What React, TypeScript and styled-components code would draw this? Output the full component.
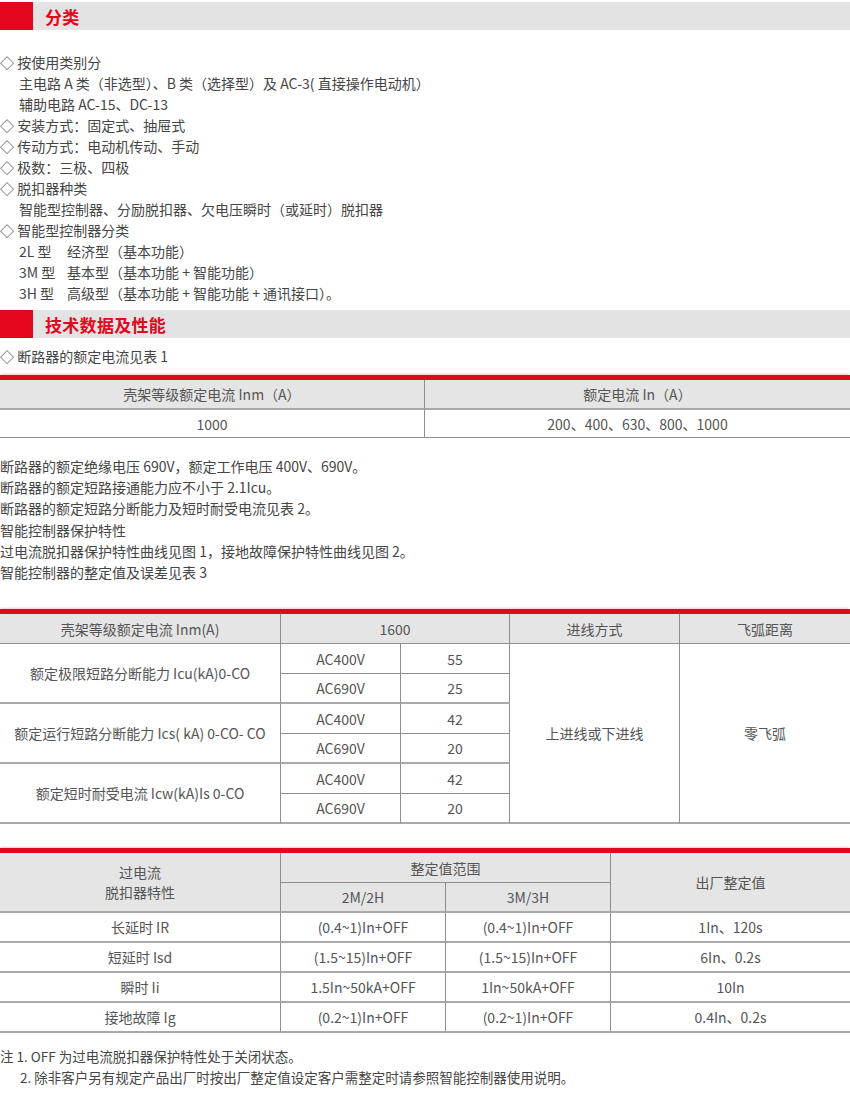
import React from 'react';
import styled, { createGlobalStyle } from 'styled-components';

const RED = '#e4061c';
const THIN = '1px solid #8e8e8e';
const THICK = '2px solid #a9a9a9';

const GlobalStyle = createGlobalStyle`
  html, body { margin: 0; padding: 0; background: #fff; }
  body {
    font-family: "Noto Sans CJK SC", "Noto Sans", sans-serif;
    color: #444;
  }
`;

const Page = styled.div`
  width: 850px;
  padding-top: 2px;
  display: flex;
  flex-direction: column;
`;

const SectionHeader = styled.div<{ $mt?: number }>`
  display: flex;
  height: 28px;
  margin-top: ${(p) => p.$mt ?? 0}px;
`;

const RedBlock = styled.div`
  width: 33px;
  background: ${RED};
`;

const HeaderBar = styled.div`
  flex: 1;
  background: #e3e3e3;
  padding-left: 12px;
  display: flex;
  align-items: center;
  font-size: 17px;
  font-weight: 700;
  color: ${RED};
  letter-spacing: 0.3px;
`;

const TextBlock = styled.div<{ $mt: number; $lh: number }>`
  margin-top: ${(p) => p.$mt}px;
  font-size: 14px;
  line-height: ${(p) => p.$lh}px;
  color: #454545;
`;

const Line = styled.div<{ $indent?: boolean }>`
  padding-left: ${(p) => (p.$indent ? 19 : 0)}px;
  white-space: nowrap;
`;

const ModelTag = styled.span`
  display: inline-block;
  width: 48px;
`;

const Grid = styled.div<{ $mt: number; $cols: string; $rows: string }>`
  margin-top: ${(p) => p.$mt}px;
  display: grid;
  grid-template-columns: ${(p) => p.$cols};
  grid-template-rows: ${(p) => p.$rows};
  border-top: 5px solid ${RED};
  box-shadow: 0 -2px 2px -1px rgba(228, 6, 28, 0.25);
  font-size: 14px;
  color: #555;
`;

type Bottom = 'thin' | 'thick' | 'none';

const Cell = styled.div<{
  $col: string;
  $row: string;
  $head?: boolean;
  $last?: boolean;
  $bb?: Bottom;
}>`
  grid-column: ${(p) => p.$col};
  grid-row: ${(p) => p.$row};
  box-sizing: border-box;
  display: flex;
  flex-direction: column;
  align-items: center;
  justify-content: center;
  text-align: center;
  line-height: 20px;
  white-space: nowrap;
  background: ${(p) => (p.$head ? '#e5e5e5' : '#fff')};
  border-right: ${(p) => (p.$last ? 'none' : THIN)};
  border-bottom: ${(p) => (p.$bb === 'thick' ? THICK : p.$bb === 'none' ? 'none' : THIN)};
`;

const Notes = styled.div`
  margin-top: 13px;
  font-size: 13.5px;
  line-height: 21px;
  color: #454545;
`;

const NoteLine = styled.div<{ $indent?: boolean }>`
  padding-left: ${(p) => (p.$indent ? 20 : 0)}px;
  white-space: nowrap;
`;

const Header: React.FC<{ title: string; mt?: number }> = ({ title, mt }) => (
  <SectionHeader $mt={mt}>
    <RedBlock />
    <HeaderBar>{title}</HeaderBar>
  </SectionHeader>
);

const groups = [
  { label: '额定极限短路分断能力 Icu(kA)0-CO', a: '55', b: '25' },
  { label: '额定运行短路分断能力 Ics( kA) 0-CO- CO', a: '42', b: '20' },
  { label: '额定短时耐受电流 Icw(kA)Is 0-CO', a: '42', b: '20' },
];

const settings = [
  ['长延时 IR', '(0.4~1)In+OFF', '(0.4~1)In+OFF', '1In、120s'],
  ['短延时 Isd', '(1.5~15)In+OFF', '(1.5~15)In+OFF', '6In、0.2s'],
  ['瞬时 Ii', '1.5In~50kA+OFF', '1In~50kA+OFF', '10In'],
  ['接地故障 Ig', '(0.2~1)In+OFF', '(0.2~1)In+OFF', '0.4In、0.2s'],
];

export default function App() {
  return (
    <>
      <GlobalStyle />
      <Page>
        <Header title="分类" />
        <TextBlock $mt={22} $lh={21}>
          <Line>◇ 按使用类别分</Line>
          <Line $indent>主电路 A 类（非选型）、B 类（选择型）及 AC-3( 直接操作电动机）</Line>
          <Line $indent>辅助电路 AC-15、DC-13</Line>
          <Line>◇ 安装方式：固定式、抽屉式</Line>
          <Line>◇ 传动方式：电动机传动、手动</Line>
          <Line>◇ 极数：三极、四极</Line>
          <Line>◇ 脱扣器种类</Line>
          <Line $indent>智能型控制器、分励脱扣器、欠电压瞬时（或延时）脱扣器</Line>
          <Line>◇ 智能型控制器分类</Line>
          <Line $indent>
            <ModelTag>2L 型</ModelTag>经济型（基本功能）
          </Line>
          <Line $indent>
            <ModelTag>3M 型</ModelTag>基本型（基本功能 + 智能功能）
          </Line>
          <Line $indent>
            <ModelTag>3H 型</ModelTag>高级型（基本功能 + 智能功能 + 通讯接口）。
          </Line>
        </TextBlock>

        <Header title="技术数据及性能" mt={6} />
        <TextBlock $mt={8} $lh={21}>
          <Line>◇ 断路器的额定电流见表 1</Line>
        </TextBlock>

        <Grid $mt={8} $cols="425px 1fr" $rows="30px 28px">
          <Cell $col="1" $row="1" $head $bb="thick">壳架等级额定电流 Inm（A）</Cell>
          <Cell $col="2" $row="1" $head $last $bb="thick">额定电流 In（A）</Cell>
          <Cell $col="1" $row="2">1000</Cell>
          <Cell $col="2" $row="2" $last>200、400、630、800、1000</Cell>
        </Grid>

        <TextBlock $mt={18} $lh={21.2}>
          <Line>断路器的额定绝缘电压 690V，额定工作电压 400V、690V。</Line>
          <Line>断路器的额定短路接通能力应不小于 2.1Icu。</Line>
          <Line>断路器的额定短路分断能力及短时耐受电流见表 2。</Line>
          <Line>智能控制器保护特性</Line>
          <Line>过电流脱扣器保护特性曲线见图 1，接地故障保护特性曲线见图 2。</Line>
          <Line>智能控制器的整定值及误差见表 3</Line>
        </TextBlock>

        <Grid $mt={26} $cols="281px 120px 109px 170px 1fr" $rows="repeat(7, 30px)">
          <Cell $col="1" $row="1" $head>壳架等级额定电流 Inm(A)</Cell>
          <Cell $col="2 / 4" $row="1" $head>1600</Cell>
          <Cell $col="4" $row="1" $head>进线方式</Cell>
          <Cell $col="5" $row="1" $head $last>飞弧距离</Cell>
          {groups.map((g, i) => {
            const r = 2 + i * 2;
            return (
              <React.Fragment key={g.label}>
                <Cell $col="1" $row={`${r} / span 2`} $bb="thick">{g.label}</Cell>
                <Cell $col="2" $row={`${r}`}>AC400V</Cell>
                <Cell $col="3" $row={`${r}`}>{g.a}</Cell>
                <Cell $col="2" $row={`${r + 1}`} $bb="thick">AC690V</Cell>
                <Cell $col="3" $row={`${r + 1}`} $bb="thick">{g.b}</Cell>
              </React.Fragment>
            );
          })}
          <Cell $col="4" $row="2 / 8" $bb="thick">上进线或下进线</Cell>
          <Cell $col="5" $row="2 / 8" $last $bb="thick">零飞弧</Cell>
        </Grid>

        <Grid $mt={24} $cols="281px 165px 165px 1fr" $rows="repeat(6, 30px)">
          <Cell $col="1" $row="1 / 3" $head $bb="thick">
            <span>过电流</span>
            <span>脱扣器特性</span>
          </Cell>
          <Cell $col="2 / 4" $row="1" $head>整定值范围</Cell>
          <Cell $col="4" $row="1 / 3" $head $last $bb="thick">出厂整定值</Cell>
          <Cell $col="2" $row="2" $head $bb="thick">2M/2H</Cell>
          <Cell $col="3" $row="2" $head $bb="thick">3M/3H</Cell>
          {settings.map((s, i) =>
            s.map((v, j) => (
              <Cell
                key={`${i}-${j}`}
                $col={`${j + 1}`}
                $row={`${i + 3}`}
                $last={j === 3}
                $bb="thick"
              >
                {v}
              </Cell>
            ))
          )}
        </Grid>

        <Notes>
          <NoteLine>注 1. OFF 为过电流脱扣器保护特性处于关闭状态。</NoteLine>
          <NoteLine $indent>2. 除非客户另有规定产品出厂时按出厂整定值设定客户需整定时请参照智能控制器使用说明。</NoteLine>
        </Notes>
      </Page>
    </>
  );
}
